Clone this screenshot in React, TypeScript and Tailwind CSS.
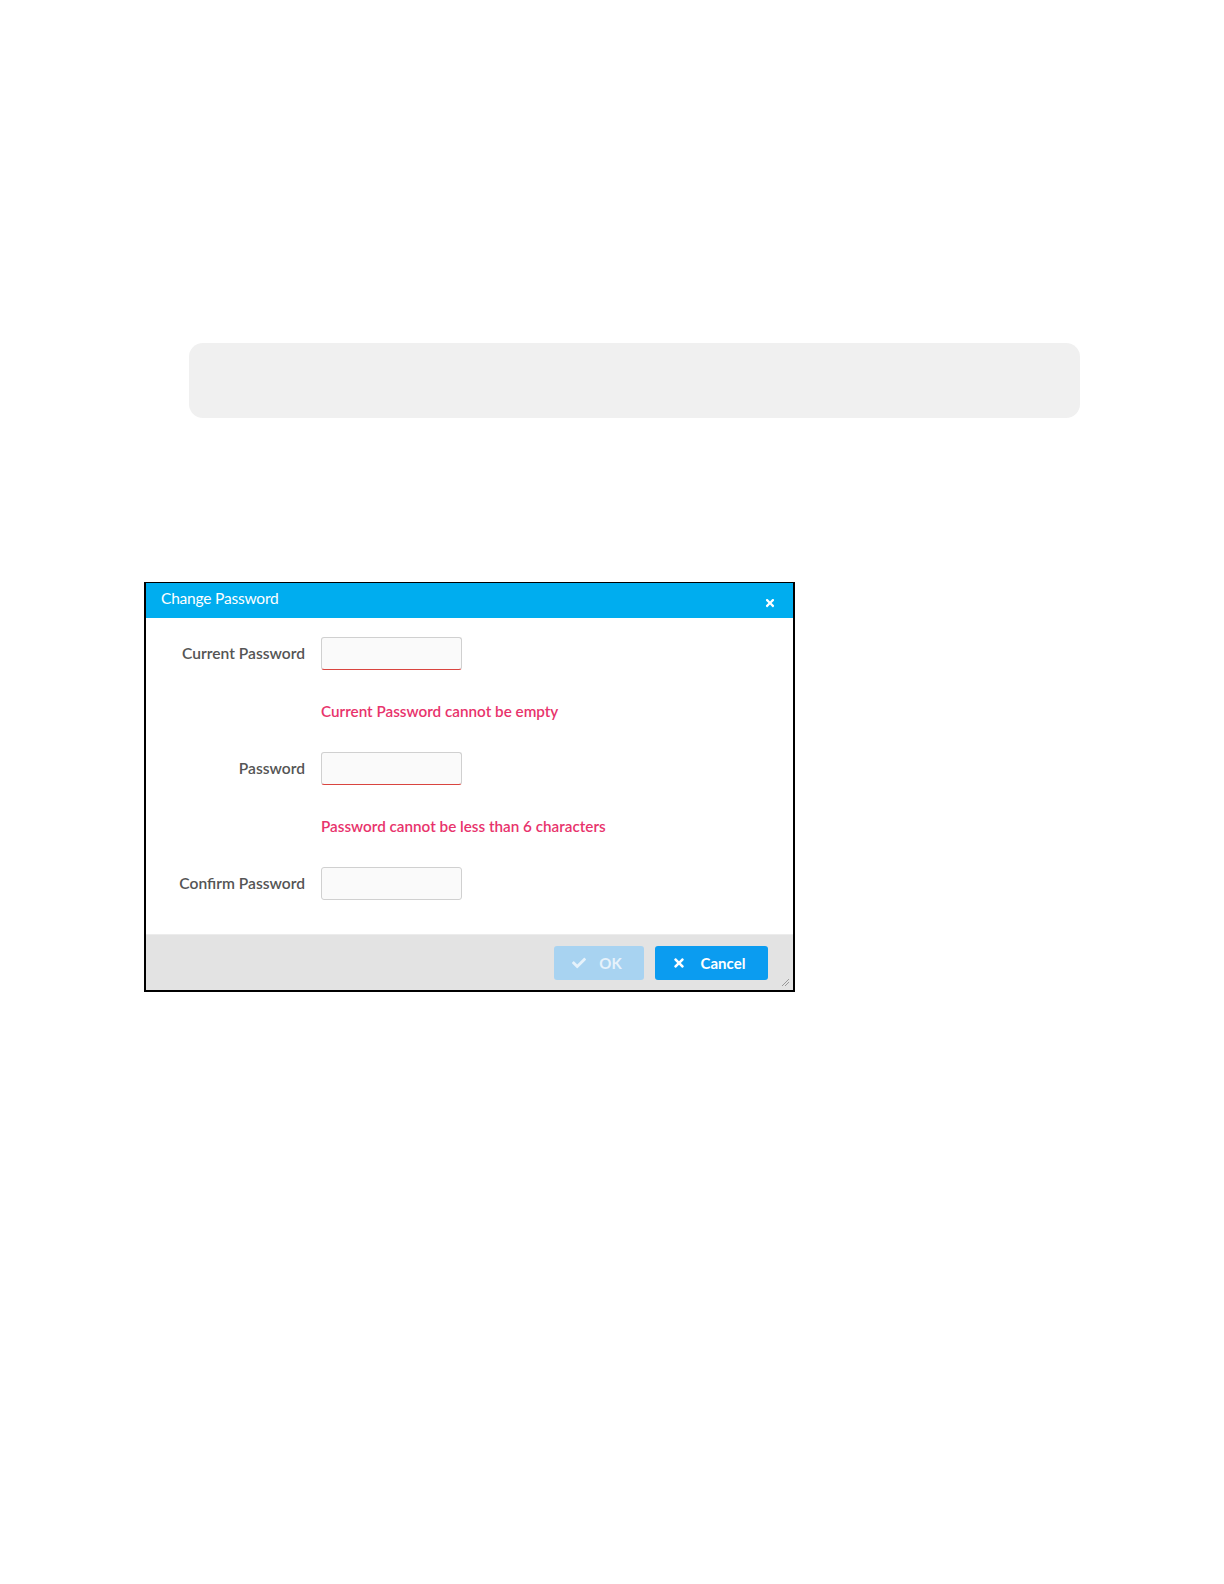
import React from "react";
import { FaCheck, FaTimes } from "react-icons/fa";

function Field({ label, error, invalid }: { label: string; error?: string; invalid?: boolean }) {
  return (
    <div className="flex flex-col">
      <div className="flex items-center">
        <div className="w-[175px] pr-[16px] text-right text-[15.6px] font-semibold text-[#555555]">{label}</div>
        <div
          className={
            "w-[141px] h-[33px] rounded-[3px] bg-[#fafafa] border border-[#d0d0d0] " +
            (invalid ? "border-b-[#d9443f]" : "")
          }
        />
      </div>
      {error ? (
        <div className="mt-[31px] mb-[31px] ml-[175px] h-[20px] leading-[20px] text-[15.25px] font-semibold text-[#e8336c]">
          {error}
        </div>
      ) : null}
    </div>
  );
}

export default function App() {
  return (
    <div
      className="min-h-[1584px] w-full bg-white"
      style={{ fontFamily: "Lato, 'Open Sans', 'Liberation Sans', sans-serif" }}
    >
      <div className="pt-[343px]">
        <div className="ml-[189px] w-[891px] h-[75px] rounded-[14px] bg-[#f0f0f0]" />
      </div>

      <div className="mt-[164px] ml-[144px] w-[651px] border-2 border-t border-black bg-white">
        <div className="relative h-[35px] bg-[#00adef] flex items-center pl-[15px] pb-[3px]">
          <span className="text-white text-[15.5px] tracking-[-0.2px]">Change Password</span>
          <FaTimes className="absolute right-[17px] top-[14px] text-white" size={12} />
        </div>

        <div className="pt-[19px] pb-[34px]">
          <Field label="Current Password" error="Current Password cannot be empty" invalid />
          <Field label="Password" error="Password cannot be less than 6 characters" invalid />
          <Field label="Confirm Password" />
        </div>

        <div className="relative h-[56px] bg-[#e3e3e3] border-t border-[#ececec] flex items-start justify-end pt-[11px] pr-[25px] gap-[11px]">
          <div className="w-[90px] h-[34px] rounded-[3px] bg-[#a8d3f1] flex items-center justify-center gap-[13px] pr-[4px] text-[#e6f2fb] font-bold text-[15px]">
            <FaCheck size={14} />
            <span>OK</span>
          </div>
          <div className="w-[113px] h-[34px] rounded-[3px] bg-[#0b9cf0] flex items-center justify-center gap-[15px] pr-[6px] text-white font-bold text-[15px]">
            <FaTimes size={14} />
            <span>Cancel</span>
          </div>
          <svg className="absolute right-[4px] bottom-[4px]" width="8" height="8" viewBox="0 0 8 8">
            <line x1="1" y1="8" x2="8" y2="1" stroke="#999" strokeWidth="1" />
            <line x1="4" y1="8" x2="8" y2="4" stroke="#999" strokeWidth="1" />
          </svg>
        </div>
      </div>
    </div>
  );
}
